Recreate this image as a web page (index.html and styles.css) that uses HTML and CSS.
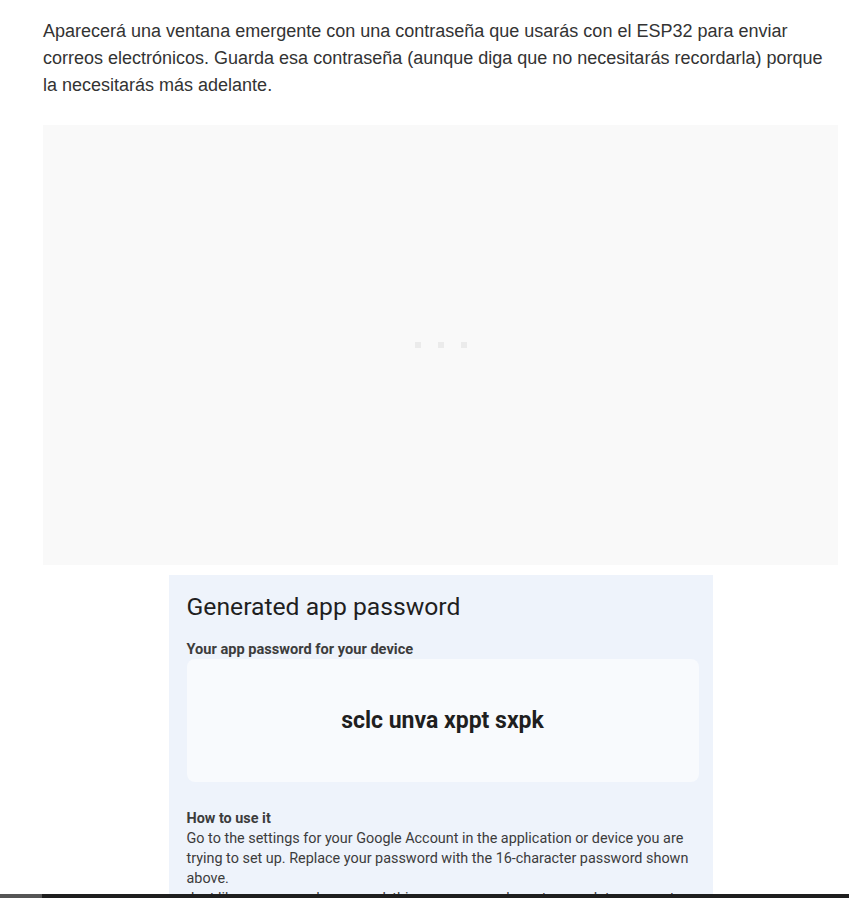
FILE: index.html
```html
<!DOCTYPE html>
<html lang="es">
<head>
<meta charset="utf-8">
<title>Contraseña de aplicación</title>
<link rel="stylesheet" href="styles.css">
</head>
<body>
<main class="content">
  <p class="intro">Aparecerá una ventana emergente con una contraseña que usarás con el ESP32 para enviar correos electrónicos. Guarda esa contraseña (aunque diga que no necesitarás recordarla) porque la necesitarás más adelante.</p>
  <div class="placeholder">
    <span class="dot"></span><span class="dot"></span><span class="dot"></span>
  </div>
  <figure class="shot">
    <h2 class="shot-title">Generated app password</h2>
    <div class="shot-label">Your app password for your device</div>
    <div class="pw-box"><span class="pw">sclc unva xppt sxpk</span></div>
    <div class="howto-title">How to use it</div>
    <p class="howto">Go to the settings for your Google Account in the application or device you are trying to set up. Replace your password with the 16-character password shown above.<br>Just like your normal password, this app password grants complete access to your Google Account.</p>
  </figure>
</main>
<div class="bottom-bar"><span class="bar-start"></span></div>
</body>
</html>
```

FILE: styles.css
```css
html, body {
  margin: 0;
  padding: 0;
  background: #ffffff;
}
body {
  font-family: "Liberation Sans", Arial, sans-serif;
  overflow: hidden;
  height: 898px;
}
.content {
  width: 795px;
  padding: 18px 0 0 43px;
}
.intro {
  margin: 0 0 26px 0;
  font-size: 18px;
  line-height: 27px;
  color: #333333;
}
.placeholder {
  height: 440px;
  background: #f9f9f9;
  display: flex;
  align-items: center;
  justify-content: center;
  gap: 17px;
}
.dot {
  width: 6px;
  height: 6px;
  background: #ebebeb;
}
.shot {
  margin: 10px auto 0;
  width: 544px;
  box-sizing: border-box;
  padding: 16px 14px 0 18px;
  background: #eef3fb;
  font-family: Roboto, "Liberation Sans", sans-serif;
  color: #1f1f1f;
  height: 330px;
}
.shot-title {
  margin: 0;
  font-size: 24.7px;
  line-height: 32px;
  font-weight: 400;
  color: #1f1f1f;
}
.shot-label {
  margin-top: 16px;
  font-size: 14.6px;
  line-height: 20px;
  font-weight: 700;
  color: #3c3c3c;
}
.pw-box {
  height: 123px;
  background: #f8fafd;
  border-radius: 8px;
  display: flex;
  align-items: center;
  justify-content: center;
}
.pw {
  font-size: 23px;
  font-weight: 700;
  color: #1f1f1f;
}
.howto-title {
  margin-top: 27px;
  font-size: 14.4px;
  line-height: 20px;
  font-weight: 700;
  color: #3c3c3c;
}
.howto {
  margin: 0;
  font-size: 14.4px;
  line-height: 20px;
  color: #3c3c3c;
}
.bottom-bar {
  position: fixed;
  left: 0;
  right: 0;
  bottom: 0;
  height: 4px;
  background: #1e1e1e;
}
.bar-start {
  display: block;
  width: 42px;
  height: 4px;
  background: #555555;
}
```
